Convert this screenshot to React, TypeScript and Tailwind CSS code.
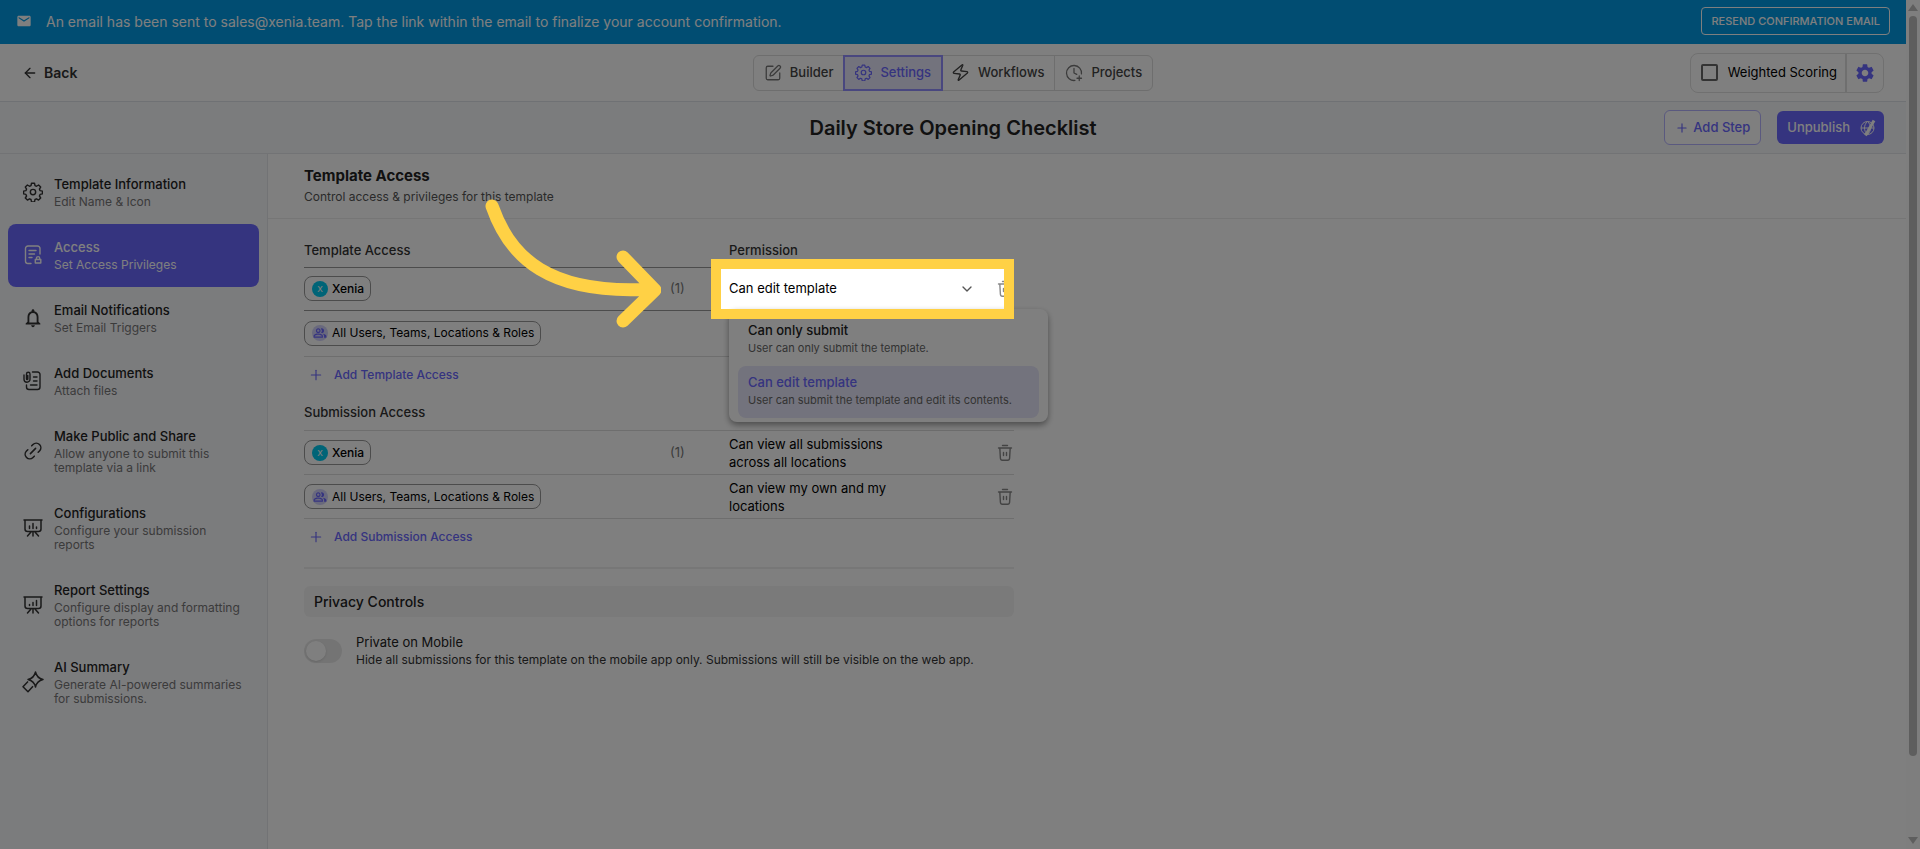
import { useState } from "react"
import type { ReactNode } from "react"
import { ArrowLeft, ChevronDown, ClockPlus, Link2, Plus, SquarePen, Zap } from "lucide-react"
import { MdEmail, MdNotificationsNone, MdOutlinePeopleAlt, MdSettings } from "react-icons/md"

const GearIcon = ({ className }: { className: string }) => (
    <svg viewBox="0 0 24 24" className={className} fill="none" stroke="currentColor" strokeWidth="1.7" strokeLinejoin="round" aria-hidden="true">
        <path d="M10.200 1.500h3.600l.6 2.800 1.800.8 2.500-1.500 2.500 2.500-1.500 2.400.8 1.900 2.800.6v3.300l-2.800.6-.8 1.900 1.500 2.400-2.500 2.500-2.500-1.500-1.800.8-.6 2.800h-3.600l-.6-2.800-1.800-.8-2.500 1.500-2.500-2.500 1.500-2.400-.8-1.900-2.800-.6v-3.300l2.800-.6.8-1.900-1.500-2.400 2.500-2.500 2.500 1.500 1.800-.8z" />
        <circle cx="12" cy="12" r="3.2" />
    </svg>
)

const AccessIcon = () => (
    <svg viewBox="0 0 20 20" className="size-5" fill="none" stroke="currentColor" strokeWidth="1.4" strokeLinecap="round" strokeLinejoin="round" aria-hidden="true">
        <path d="M8 18.500H5a2.500 2.500 0 0 1-2.500-2.500V3.500A2.500 2.500 0 0 1 5 1h9.500A2.500 2.500 0 0 1 17 3.500V9M6 5.500h7M6 9h5.500M6 12.500h3" />
        <path d="M13.500 14.500v-1.300a1.600 1.600 0 0 1 3.200 0v1.300M12.300 14.500h5.500v3.500h-5.500z" />
    </svg>
)

const DocumentIcon = () => (
    <svg viewBox="0 0 20 20" className="size-5" fill="none" stroke="currentColor" strokeWidth="1.4" strokeLinecap="round" strokeLinejoin="round" aria-hidden="true">
        <path d="M9.500 1h5A2.500 2.500 0 0 1 17 3.500v12.500a2.500 2.500 0 0 1-2.500 2.500H6A2.500 2.500 0 0 1 3.500 16v-2M10.500 6H14M10.500 10H14M7.500 14H14" />
        <path d="M1 4v4.200a3 3 0 0 0 6 0V3a1.700 1.700 0 0 0-3.500 0v5a.6.6 0 0 0 1.300 0V4.500" />
    </svg>
)

const BoardIcon = ({ bars }: { bars: string }) => (
    <svg viewBox="0 0 20 20" className="size-5" fill="none" stroke="currentColor" strokeWidth="1.5" strokeLinecap="round" strokeLinejoin="round" aria-hidden="true">
        <path d="M1 2h18M2 2v9a2.500 2.500 0 0 0 2.500 2.500h11A2.500 2.500 0 0 0 18 11V2M10 13.500V18M8 14l-3.500 4M12 14l3.500 4" />
        <path d={bars} />
    </svg>
)

const SparkleIcon = () => (
    <svg viewBox="0 0 22 22" className="size-[22px]" fill="none" stroke="currentColor" strokeWidth="1.5" strokeLinejoin="round" aria-hidden="true">
        <path d="M13.500 1c.9 4 3.200 6.500 7.500 7.500-4.300 1-6.600 3.500-7.500 7.500-.9-4-3.200-6.500-7.500-7.500 4.300-1 6.600-3.500 7.500-7.500z" />
        <path d="M6 10.500 1 15.800l5 5 5-5.500" />
    </svg>
)

const TrashIcon = () => (
    <svg viewBox="0 0 16 18" className="h-[18px] w-4" fill="none" stroke="currentColor" strokeWidth="1.4" strokeLinecap="round" strokeLinejoin="round" aria-hidden="true">
        <path d="M1.500 4h13M5.500 1.500h5M2.800 4l.6 10.300A2 2 0 0 0 5.400 16.200h5.200a2 2 0 0 0 2-1.900L13.200 4M6.500 8.500v3M9.500 8.500v3" />
    </svg>
)

const UnpublishIcon = () => (
    <svg viewBox="0 0 16 18" className="h-[18px] w-4" fill="none" stroke="currentColor" strokeWidth="1" aria-hidden="true">
        <circle cx="7.500" cy="9" r="6.500" />
        <path d="M1 9h13M7.500 2.500c-4 3.500-4 9.500 0 13M7.500 2.500c4 3.500 4 9.500 0 13" />
        <path d="M14 1.500 5.500 16.500" strokeWidth="3" />
    </svg>
)

const sections: { title: string, subtitle: string, icon: ReactNode }[] = [
    { title: "Template Information", subtitle: "Edit Name & Icon", icon: <GearIcon className="size-5" /> },
    { title: "Access", subtitle: "Set Access Privileges", icon: <AccessIcon /> },
    { title: "Email Notifications", subtitle: "Set Email Triggers", icon: <MdNotificationsNone className="size-[22px]" /> },
    { title: "Add Documents", subtitle: "Attach files", icon: <DocumentIcon /> },
    { title: "Make Public and Share", subtitle: "Allow anyone to submit this template via a link", icon: <Link2 className="size-[22px] -rotate-45" strokeWidth={1.7} /> },
    { title: "Configurations", subtitle: "Configure your submission reports", icon: <BoardIcon bars="M6.500 8v2.500M10 5.500v5M13.500 9v1.500" /> },
    { title: "Report Settings", subtitle: "Configure display and formatting options for reports", icon: <BoardIcon bars="M6.500 9.500v1M10 7.500v3M13.500 5.500v5" /> },
    { title: "AI Summary", subtitle: "Generate AI-powered summaries for submissions.", icon: <SparkleIcon /> },
]

const options = [
    { label: "Can only submit", description: "User can only submit the template." },
    { label: "Can edit template", description: "User can submit the template and edit its contents." },
]

const Banner = () => (
    <div className="flex h-11 items-center bg-[#039be5] px-4 pb-0.5 text-white">
        <MdEmail className="size-4" />
        <p className="ml-3.5 text-[14px]">An email has been sent to sales@xenia.team. Tap the link within the email to finalize your account confirmation.</p>
        <button className="ml-auto h-7 rounded border border-white px-[9px] text-[11px] font-medium">RESEND CONFIRMATION EMAIL</button>
    </div>
)

const Header = () => (
    <header className="grid h-[58px] grid-cols-[1fr_auto_1fr] items-center border-b border-[#dfe2e8] bg-white px-[22px]">
        <a href="#back" className="flex items-center gap-1.5 text-[14px] font-semibold text-[#333]">
            <ArrowLeft className="size-4" />Back
        </a>
        <nav className="flex h-9 items-center rounded-md border border-[#dcdcdc] text-[13px] font-medium text-[#444]">
            <button className="flex h-full items-center gap-2 px-2.5"><SquarePen className="size-[18px] text-[#777]" strokeWidth={1.7} />Builder</button>
            <button className="flex h-9 items-center gap-2 border-2 border-[#928fff] bg-[#e7e6fa] px-2.5 text-[#6b68ff]"><GearIcon className="size-[17px]" />Settings</button>
            <button className="flex h-full items-center gap-2 border-r border-[#dcdcdc] pr-2.5 pl-2"><Zap className="size-[19px] rotate-6" strokeWidth={1.7} />Workflows</button>
            <button className="flex h-full items-center gap-2 px-2.5"><ClockPlus className="size-[18px] text-[#777]" strokeWidth={1.7} />Projects</button>
        </nav>
        <div className="flex h-10 items-center justify-self-end rounded-lg border border-[#e0e0e0]">
            <label className="flex h-full items-center gap-2.5 border-r-2 border-[#dedede] pr-2 pl-2.5 text-[13px] text-black">
                <input type="checkbox" className="size-[17px] appearance-none rounded-xs border-2 border-[#666]" />
                Weighted Scoring
            </label>
            <button aria-label="Scoring settings" className="px-[7px] text-[#6b68ff]"><MdSettings className="size-[22px]" /></button>
        </div>
    </header>
)

const TitleBar = () => (
    <div className="grid h-[52px] grid-cols-[1fr_auto_1fr] items-center border-b border-[#e4e6ea] bg-[#f7f8fb] px-[22px]">
        <h1 className="col-start-2 text-[20px] font-semibold text-[#222]">Daily Store Opening Checklist</h1>
        <div className="flex items-center gap-4 justify-self-end text-[13px]">
            <button className="flex h-[35px] items-center gap-1 rounded-md border border-[#b5b3ff] bg-white px-2.5 font-medium text-[#6b68ff]"><Plus className="size-3.5" />Add Step</button>
            <button className="flex h-[33px] items-center gap-2.5 rounded-md bg-[#6b68ff] pr-2 pl-2.5 font-medium text-white">Unpublish<UnpublishIcon /></button>
        </div>
    </div>
)

const Sidebar = () => (
    <nav className="w-[268px] shrink-0 border-r border-[#e4e6ea] bg-[#f7f8fb] px-2 pt-[7px]">
        {sections.map((section) => {
            const active = section.title === "Access"
            return (
                <a key={section.title} href="#section" className={`flex items-center rounded-lg pt-3.5 pr-3.5 pb-[15px] pl-3.5 ${active ? "bg-[#6b68ff] text-white" : "text-[#333]"}`}>
                    <span className="flex w-[22px] shrink-0 justify-center">{section.icon}</span>
                    <span className="ml-2.5">
                        <span className={`block text-[13px] leading-[18px] font-medium ${active ? "text-white" : "text-[#222]"}`}>{section.title}</span>
                        <span className={`mt-0.5 block text-[12px] leading-[14px] ${active ? "text-white" : "text-[#777]"}`}>{section.subtitle}</span>
                    </span>
                </a>
            )
        })}
    </nav>
)

const XeniaChip = () => (
    <span className="inline-flex h-[25px] items-center gap-1 rounded-lg border border-[#999] pr-1.5 pl-[7px] text-[12px] font-medium text-black">
        <span className="flex size-4 items-center justify-center rounded-full bg-[#00c8ee] text-[8px] font-medium text-white">X</span>
        Xenia
    </span>
)

const AllUsersChip = () => (
    <span className="inline-flex h-[25px] items-center gap-1 rounded-lg border border-[#999] pr-1.5 pl-[7px] text-[12px] text-black">
        <span className="flex size-4 items-center justify-center rounded-full bg-[#d3d2fb] text-[#6b68ff]"><MdOutlinePeopleAlt className="size-3.5" /></span>
        All Users, Teams, Locations &amp; Roles
    </span>
)

const PermissionMenu = () => (
    <ul role="listbox" aria-label="Permission" className="absolute top-[41px] left-0 z-10 h-[113px] w-[319px] rounded-lg bg-white px-[9px] pt-[5px] shadow-[0_3px_6px_rgba(0,0,0,0.4)]">
        {options.map((option) => {
            const selected = option.label === "Can edit template"
            return (
                <li key={option.label} role="option" aria-selected={selected} className={`h-[52px] rounded-lg px-2.5 pt-[7px] ${selected ? "bg-[#e7e6fa]" : ""}`}>
                    <p className={`text-[13px] leading-[18px] font-medium ${selected ? "text-[#6b68ff]" : "text-[#222]"}`}>{option.label}</p>
                    <p className="text-[11px] leading-[18px] text-[#666]">{option.description}</p>
                </li>
            )
        })}
    </ul>
)

// Dims the page around the highlighted cell and points an arrow at it
const Spotlight = () => (
    <>
        <div className="pointer-events-none absolute -top-[9px] -left-[18px] z-20 h-[60px] w-[303px] border-10 border-[#ffd145] shadow-[0_0_0_9999px_rgba(0,0,0,0.5)]" />
        <svg viewBox="0 0 180 140" className="pointer-events-none absolute -top-[78px] -left-[248px] z-30 h-[140px] w-[180px]" fill="none" stroke="#ffd145" strokeWidth="13" strokeLinecap="round" strokeLinejoin="round" aria-hidden="true">
            <path d="M11 16C29 68 68 105 170 99M142 67l32 33-32 31" />
        </svg>
    </>
)

const DeleteButton = ({ name }: { name: string }) => (
    <button aria-label={`Remove ${name}`} className="flex text-[#888]"><TrashIcon /></button>
)

const TemplateAccessTable = () => (
    <table className="w-full table-fixed text-left text-[13px]">
        <thead>
            <tr className="h-8 border-b border-[#999] text-[#333]">
                <th className="w-[366px] font-medium">Template Access</th>
                <th className="w-[59px]"></th>
                <th className="w-[268px] font-medium">Permission</th>
                <th></th>
            </tr>
        </thead>
        <tbody>
            <tr className="h-[43px] border-b border-[#999]">
                <td><XeniaChip /></td>
                <td className="text-[#777]">(1)</td>
                <td className="relative">
                    <button aria-haspopup="listbox" aria-expanded="true" className="flex w-full items-center justify-between pr-[22px] text-black">
                        Can edit template<ChevronDown className="size-4 text-[#555]" />
                    </button>
                    <PermissionMenu />
                    <Spotlight />
                </td>
                <td><DeleteButton name="Xenia" /></td>
            </tr>
            <tr className="h-[46px] border-b border-[#dcdcdc]">
                <td><AllUsersChip /></td>
                <td></td>
                <td></td>
                <td></td>
            </tr>
        </tbody>
    </table>
)

const SubmissionAccessTable = () => (
    <table className="w-full table-fixed text-left text-[13px]">
        <thead>
            <tr className="h-9 border-b border-[#dcdcdc] text-[#333]">
                <th className="w-[366px] font-medium">Submission Access</th>
                <th className="w-[59px]"></th>
                <th className="w-[268px]"></th>
                <th></th>
            </tr>
        </thead>
        <tbody>
            <tr className="h-11 border-b border-[#dcdcdc]">
                <td><XeniaChip /></td>
                <td className="text-[#777]">(1)</td>
                <td className="pr-[100px] leading-[18px] text-black">Can view all submissions across all locations</td>
                <td><DeleteButton name="Xenia" /></td>
            </tr>
            <tr className="h-11 border-b border-[#dcdcdc]">
                <td><AllUsersChip /></td>
                <td></td>
                <td className="pr-[100px] leading-[18px] text-black">Can view my own and my locations</td>
                <td><DeleteButton name="all users" /></td>
            </tr>
        </tbody>
    </table>
)

const AddButton = ({ children }: { children: ReactNode }) => (
    <button className="flex h-9 items-center gap-2.5 pl-1 text-[12px] font-medium text-[#6b68ff]">
        <Plus className="size-4" strokeWidth={1.7} />{children}
    </button>
)

const PrivacyControls = () => {
    const [isPrivate, setIsPrivate] = useState(false)

    return (
        <section className="mt-3 border-t-2 border-[#efefef] pt-[17px]">
            <h3 className="flex h-[31px] items-center rounded-md bg-[#f5f5f5] px-2.5 text-[14px] font-medium text-[#222]">Privacy Controls</h3>
            <div className="mt-4 flex items-center gap-3.5">
                <input
                    id="privateOnMobile"
                    type="checkbox"
                    role="switch"
                    checked={isPrivate}
                    onChange={(e) => setIsPrivate(e.target.checked)}
                    className="h-6 w-[38px] appearance-none rounded-full bg-[#e9e9e9] before:m-0.5 before:block before:size-5 before:rounded-full before:bg-white before:shadow-sm checked:bg-[#6b68ff] checked:before:ml-4"
                />
                <label htmlFor="privateOnMobile" className="text-[#222]">
                    <span className="block text-[13px] leading-[18px]">Private on Mobile</span>
                    <span className="block text-[12px] leading-[18px] text-[#333]">Hide all submissions for this template on the mobile app only. Submissions will still be visible on the web app.</span>
                </label>
            </div>
        </section>
    )
}

const Scrollbar = () => (
    <div className="flex w-3.5 shrink-0 flex-col items-center bg-[#fcfcfc] py-1 text-[#bdbdbd]" aria-hidden="true">
        <svg viewBox="0 0 10 8" className="h-2 w-2.5 fill-current"><path d="M5 0l5 7H0z" /></svg>
        <div className="mt-1 mb-auto h-[88%] w-2 rounded-full bg-[#bdbdbd]" />
        <svg viewBox="0 0 10 8" className="h-2 w-2.5 fill-current"><path d="M5 7l5-7H0z" /></svg>
    </div>
)

const App = () => {
    return (
        <div className="flex h-screen overflow-hidden bg-white font-['Inter','Liberation_Sans',sans-serif]">
            <div className="flex min-w-0 flex-1 flex-col">
                <Banner />
                <Header />
                <TitleBar />
                <div className="flex flex-1">
                    <Sidebar />
                    <main className="flex-1">
                        <div className="h-[65px] border-b border-[#ececec] pt-3 pl-9">
                            <h2 className="text-[15px] leading-5 font-bold text-[#222]">Template Access</h2>
                            <p className="mt-0.5 text-[12px] leading-[18px] text-[#555]">Control access &amp; privileges for this template</p>
                        </div>
                        <div className="mt-4 ml-9 w-[710px]">
                            <TemplateAccessTable />
                            <AddButton>Add Template Access</AddButton>
                            <div className="h-0.5" />
                            <SubmissionAccessTable />
                            <AddButton>Add Submission Access</AddButton>
                            <PrivacyControls />
                        </div>
                    </main>
                </div>
            </div>
            <Scrollbar />
        </div>
    )
}
export default App
